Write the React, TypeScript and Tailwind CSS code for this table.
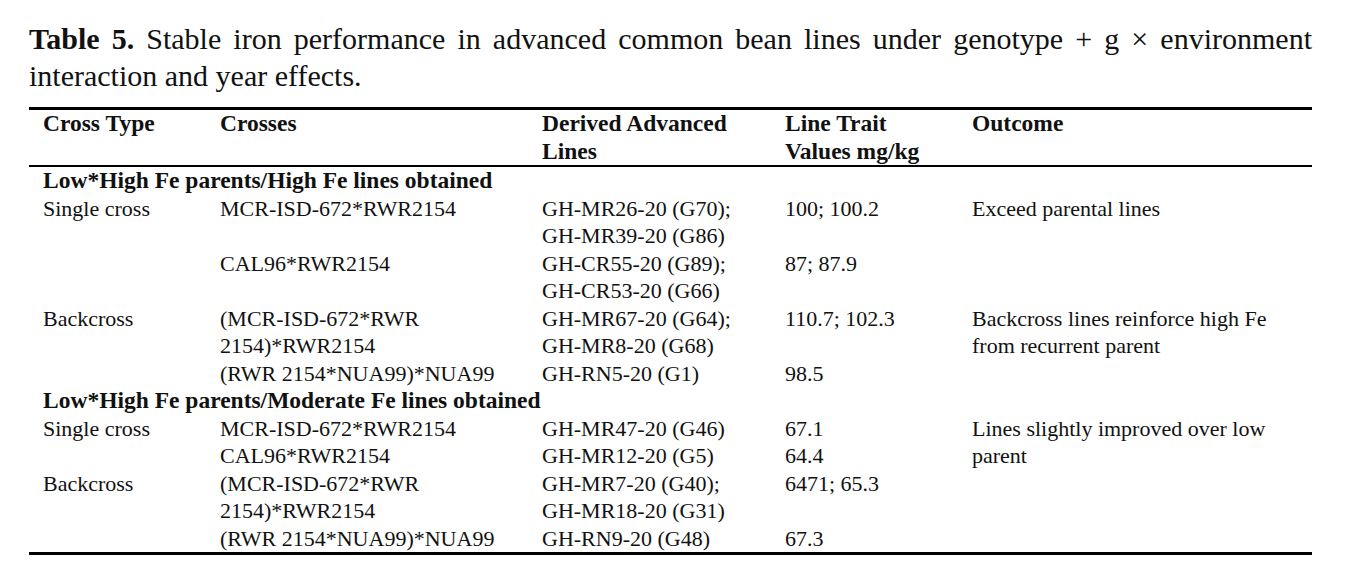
import React from "react";

type Row = {
  type?: string[];
  cross: string[];
  lines: string[];
  values: string[];
  outcome?: string[];
  outcomeSpan?: number;
  skipOutcome?: boolean;
};

const group1: Row[] = [
  {
    type: ["Single cross"],
    cross: ["MCR-ISD-672*RWR2154"],
    lines: ["GH-MR26-20 (G70);", "GH-MR39-20 (G86)"],
    values: ["100; 100.2"],
    outcome: ["Exceed parental lines"],
  },
  {
    cross: ["CAL96*RWR2154"],
    lines: ["GH-CR55-20 (G89);", "GH-CR53-20 (G66)"],
    values: ["87; 87.9"],
  },
  {
    type: ["Backcross"],
    cross: ["(MCR-ISD-672*RWR", "2154)*RWR2154"],
    lines: ["GH-MR67-20 (G64);", "GH-MR8-20 (G68)"],
    values: ["110.7; 102.3"],
    outcome: ["Backcross lines reinforce high Fe", "from recurrent parent"],
  },
  {
    cross: ["(RWR 2154*NUA99)*NUA99"],
    lines: ["GH-RN5-20 (G1)"],
    values: ["98.5"],
  },
];

const group2: Row[] = [
  {
    type: ["Single cross"],
    cross: ["MCR-ISD-672*RWR2154"],
    lines: ["GH-MR47-20 (G46)"],
    values: ["67.1"],
    outcome: ["Lines slightly improved over low", "parent"],
    outcomeSpan: 2,
  },
  {
    cross: ["CAL96*RWR2154"],
    lines: ["GH-MR12-20 (G5)"],
    values: ["64.4"],
    skipOutcome: true,
  },
  {
    type: ["Backcross"],
    cross: ["(MCR-ISD-672*RWR", "2154)*RWR2154"],
    lines: ["GH-MR7-20 (G40);", "GH-MR18-20 (G31)"],
    values: ["6471; 65.3"],
  },
  {
    cross: ["(RWR 2154*NUA99)*NUA99"],
    lines: ["GH-RN9-20 (G48)"],
    values: ["67.3"],
  },
];

function Lines({ items }: { items?: string[] }) {
  if (!items) return null;
  return (
    <>
      {items.map((t, i) => (
        <div key={i} className="whitespace-nowrap">
          {t}
        </div>
      ))}
    </>
  );
}

const td = "p-0 pl-[14px] align-top text-left";

function DataRows({ rows }: { rows: Row[] }) {
  return (
    <>
      {rows.map((r, i) => (
        <tr key={i}>
          <td className={td}>
            <Lines items={r.type} />
          </td>
          <td className={td}>
            <Lines items={r.cross} />
          </td>
          <td className={td}>
            <Lines items={r.lines} />
          </td>
          <td className={td}>
            <Lines items={r.values} />
          </td>
          {!r.skipOutcome && (
            <td className={td} rowSpan={r.outcomeSpan ?? 1}>
              <Lines items={r.outcome} />
            </td>
          )}
        </tr>
      ))}
    </>
  );
}

export default function App() {
  return (
    <div
      className="min-h-[584px] w-[1347px] bg-white pl-[29px] pt-[20px] text-[#111111]"
      style={{ fontFamily: '"Liberation Serif", "Times New Roman", serif' }}
    >
      <div className="w-[1283px]">
        <p className="text-justify text-[30px] leading-[37px] [text-align-last:left]">
          <b className="font-bold">Table 5.</b> Stable iron performance in advanced common
          bean lines under genotype + g × environment interaction and year effects.
        </p>
        <table className="mt-[13px] w-[1283px] table-fixed border-collapse text-[22px] leading-[27.5px]">
          <colgroup>
            <col className="w-[177px]" />
            <col className="w-[322px]" />
            <col className="w-[243px]" />
            <col className="w-[187px]" />
            <col />
          </colgroup>
          <thead>
            <tr className="border-t-[3px] border-b-[2px] border-black text-[23.5px] font-bold">
              <th className={td}>
                <div>Cross Type</div>
              </th>
              <th className={td}>
                <div>Crosses</div>
              </th>
              <th className={td}>
                <div>Derived Advanced</div>
                <div>Lines</div>
              </th>
              <th className={td}>
                <div>Line Trait</div>
                <div>Values mg/kg</div>
              </th>
              <th className={td}>
                <div>Outcome</div>
              </th>
            </tr>
          </thead>
          <tbody className="border-b-[3px] border-black font-normal">
            <tr>
              <td colSpan={5} className={td}>
                <b className="text-[23.5px] font-bold">Low*High Fe parents/High Fe lines obtained</b>
              </td>
            </tr>
            <DataRows rows={group1} />
            <tr>
              <td colSpan={5} className={td}>
                <b className="text-[23.5px] font-bold">Low*High Fe parents/Moderate Fe lines obtained</b>
              </td>
            </tr>
            <DataRows rows={group2} />
          </tbody>
        </table>
      </div>
    </div>
  );
}
